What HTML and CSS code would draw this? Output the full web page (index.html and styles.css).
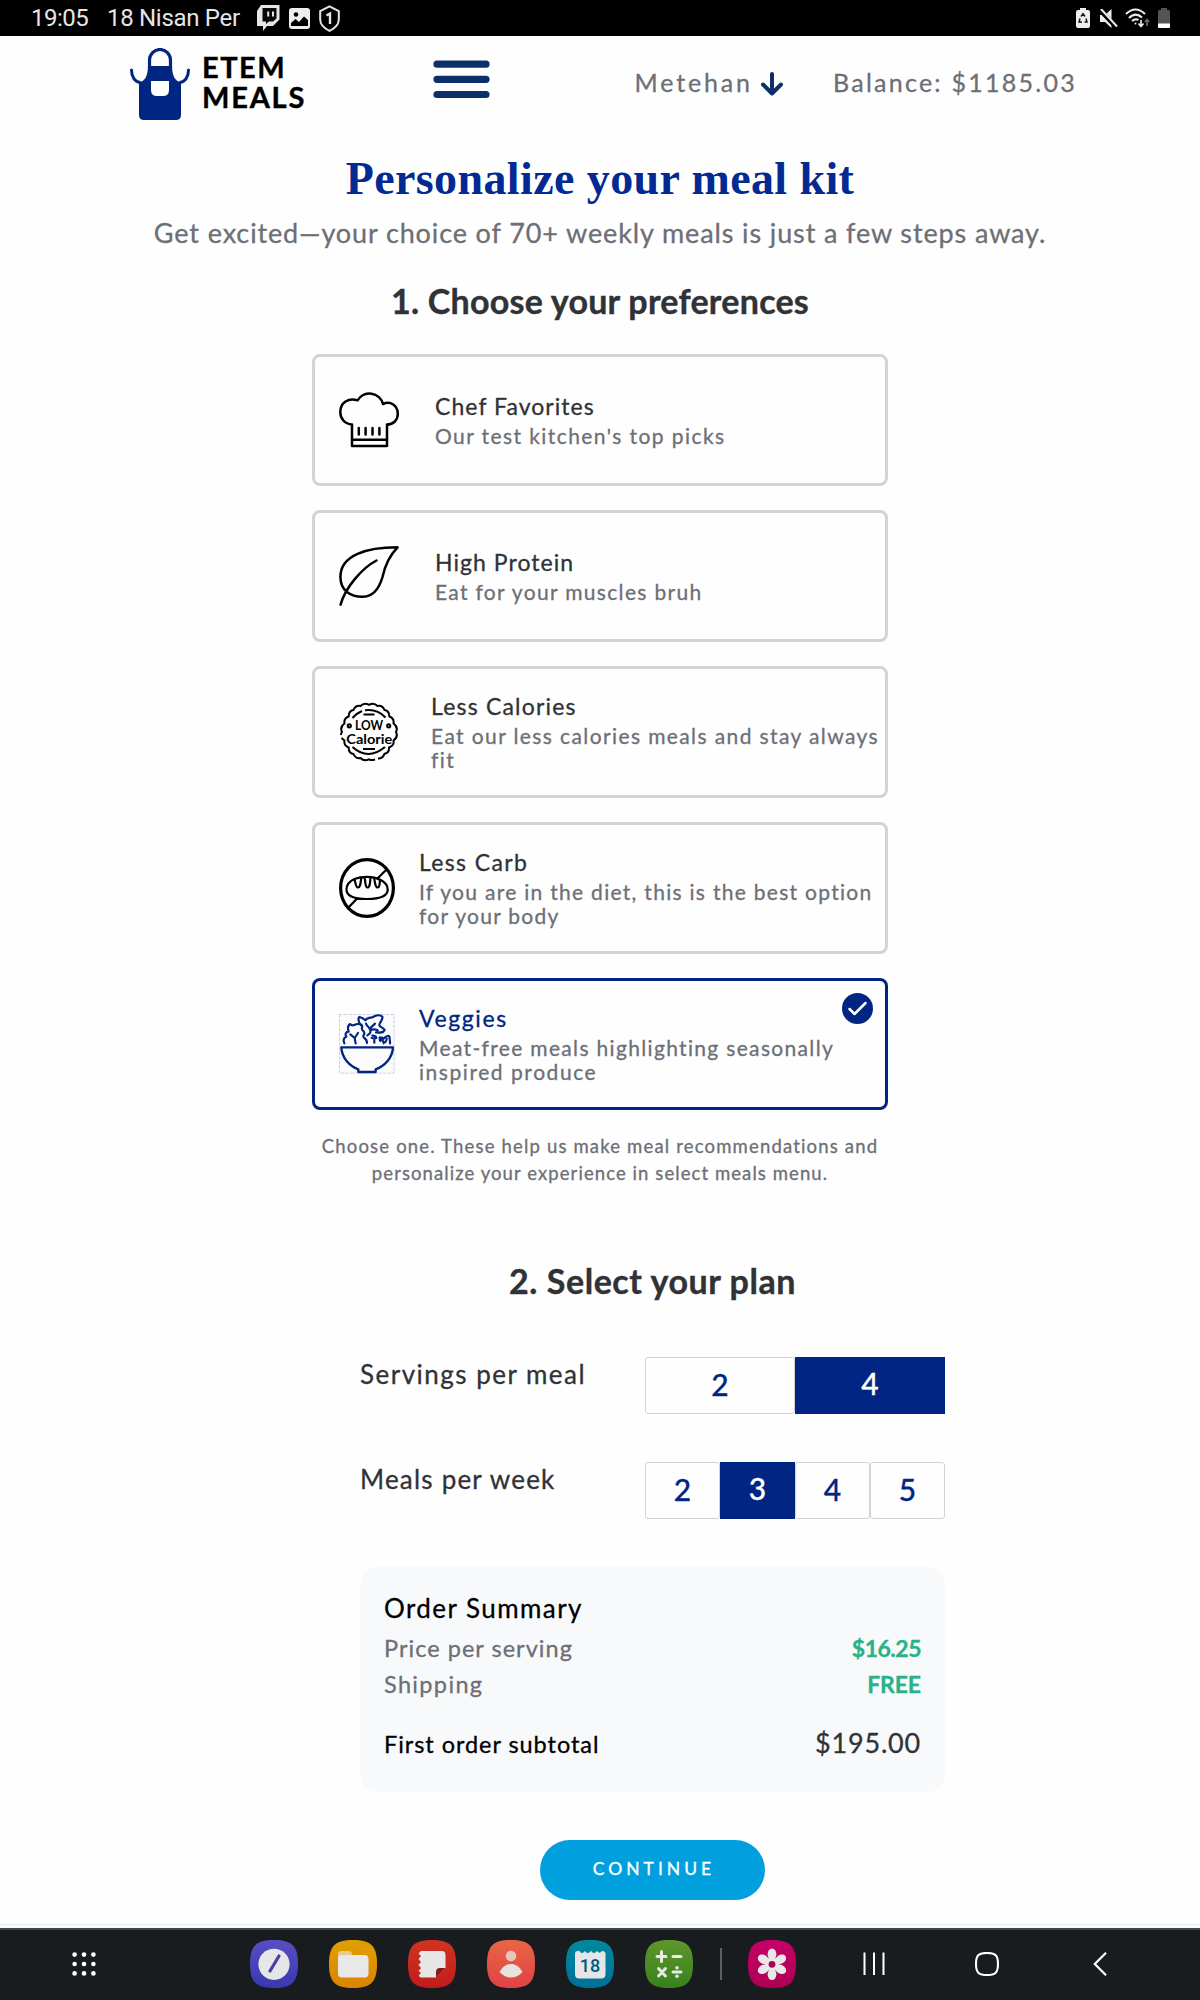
FILE: index.html
```html
<!DOCTYPE html>
<html lang="en">
<head>
<meta charset="utf-8">
<title>Etem Meals</title>
<link rel="stylesheet" href="styles.css">
</head>
<body>
<div class="status">
  <span class="time">19:05</span>
  <span class="date">18 Nisan Per</span>
  <div class="status-left">
    <svg width="23" height="26" viewBox="0 0 23 26"><path d="M4 0H22.500V14.500L16 21H10L6 26V21H0V6Z" fill="#e6e6e6"/><path d="M5.500 3H19.500V13.500L16 16.500H12L9 19V16.500H5.500Z" fill="#0a0a0a"/><path d="M11.200 6.500V11.500M16 6.500V11.500" stroke="#e6e6e6" stroke-width="2"/></svg>
    <svg width="21" height="21" viewBox="0 0 21 21"><rect width="21" height="21" rx="3" fill="#eee"/><circle cx="7" cy="6.500" r="2.300"/><path d="M2 18V15L6.500 11 10 14 15 8.500 19 12V18Z"/></svg>
    <svg width="21" height="27" viewBox="0 0 21 27" fill="none" stroke="#e6e6e6" stroke-width="2"><path d="M10.500 1.300 19.800 6V14.500C19.800 20 15.500 23.500 10.500 25.800 5.500 23.500 1.200 20 1.200 14.500V6Z"/><path d="M7.500 10.500 11 8.500V19" stroke-width="2.400"/></svg>
  </div>
  <div class="status-right">
    <svg width="14" height="20" viewBox="0 0 14 20"><path d="M4 0H10V2H12Q14 2 14 4V18Q14 20 12 20H2Q0 20 0 18V4Q0 2 2 2H4Z" fill="#eee"/><path d="M5 8.500 7 5.800 9 8.500M10 10.500 11 14H8.500M4 10.500 3 14H6" fill="none" stroke="#111" stroke-width="1.400"/></svg>
    <svg width="19" height="19" viewBox="0 0 19 19"><path d="M1 6H6L12.500 0V19L6 13H1Z" fill="#eee"/><path d="M0 0 18 19" stroke="#000" stroke-width="4.500"/><path d="M2 0 18 17.500" stroke="#eee" stroke-width="2"/></svg>
    <svg width="25" height="20" viewBox="0 0 25 20" fill="none" stroke="#eee" stroke-width="2.100"><path d="M1 6Q10.500-3 20 6M4 10Q10.500 3.500 17 9.500M7 13Q10.500 10 13.500 12"/><circle cx="10.500" cy="15.500" r="1" fill="#eee" stroke="none"/><path d="M16 12V18M13.500 15.500 16 18.500 18.500 15.500" stroke-width="1.600"/><path d="M22 18V12M19.800 14 22 11.500 24.200 14" stroke="#666" stroke-width="1.800"/></svg>
    <svg width="12" height="20" viewBox="0 0 12 20"><path d="M3 0H9V2H10.500Q12 2 12 4V20H0V4Q0 2 1.500 2H3Z" fill="#555"/><path d="M0 15.500H12V18.500Q12 20 10.500 20H1.500Q0 20 0 18.500Z" fill="#fff"/></svg>
  </div>
</div>

<header class="header">
  <a class="logo">
    <svg width="60" height="72" viewBox="0 0 60 72"><path d="M19.500 20V12.500A10.500 11 0 0 1 40.500 12.500V20" fill="none" stroke="#002582" stroke-width="3.200"/><path d="M18 18H42C42 27 45 34 51 34V67Q51 72 46 72H14Q9 72 9 67V34C15 34 18 27 18 18Z" fill="#002582"/><path d="M1.500 22C1.500 29 5 34 10 34.500M58.500 22C58.500 29 55 34 50 34.500" fill="none" stroke="#002582" stroke-width="3" stroke-linecap="round"/><path d="M21 33H39V42Q39 48 33 48H27Q21 48 21 42Z" fill="#fff"/></svg>
    <span class="brand"><span class="brand-a">ETEM</span><span class="brand-b">MEALS</span></span>
  </a>
  <svg class="burger" width="57" height="39" viewBox="0 0 57 39"><path d="M4 4.200H53M4 19.300H53M4 34.500H53" stroke="#0b3069" stroke-width="7.200" stroke-linecap="round"/></svg>
  <span class="user">Metehan <svg width="22" height="24" viewBox="0 0 22 24" fill="none" stroke="#0b3069" stroke-width="4" stroke-linecap="round" stroke-linejoin="round"><path d="M11 2V21M2 12.500 11 21.500 20 12.500"/></svg></span>
  <span class="balance">Balance: $1185.03</span>
</header>

<main class="main">
  <h1>Personalize your meal kit</h1>
  <p class="lead">Get excited—your choice of 70+ weekly meals is just a few steps away.</p>

  <h2>1. Choose your preferences</h2>
  <div class="cards">
    <div class="card chef">
      <svg width="60" height="60" viewBox="0 0 60 60" fill="none" stroke="#000" stroke-width="2.500" stroke-linejoin="round"><path d="M13 34.500C5.500 34 1.300 28.500 1.300 22 1.300 12.500 9.500 7.500 18.600 10.400A13.900 13.900 0 0 1 44 14C51.500 10.500 58.800 15.500 58.800 24 58.800 30 54.500 34.500 48 34.500V56H13ZM13 49.800H48"/><path d="M19.800 38V44.500M26.600 38V44.500M33.500 38V44.500M40.400 38V44.500" stroke-linecap="round"/></svg>
      <div><h3>Chef Favorites</h3><p>Our test kitchen's top picks</p></div>
    </div>
    <div class="card protein">
      <svg width="60" height="60" viewBox="0 0 60 60" fill="none" stroke="#000" stroke-width="2.500" stroke-linecap="round" stroke-linejoin="round"><path d="M58.600 1.300C28 1.300 1.400 9 1.400 31 1.400 45 12 51 24 50.700 34 50.500 40 43 43.500 31 46.500 17 51 9 58.600 1.300ZM37.500 14.500C23 22 6 42 1.600 58.600"/></svg>
      <div><h3>High Protein</h3><p>Eat for your muscles bruh</p></div>
    </div>
    <div class="card calories">
      <svg width="60" height="60" viewBox="0 0 60 60" fill="none" stroke="#000" stroke-width="2" stroke-linejoin="round"><path d="M39 56.500Q43.500 56.800 45.500 51.800 50.500 50.800 50 45.500 55.500 43.500 54.500 38.500 59.500 35 57 30 59.500 25 54.500 21.500 55.500 16.500 50.300 14.500 50.500 9 45.500 8 43.500 3 38.500 4 35 .3 30 2.800 25 .3 21.500 4 16.500 3 14.500 8 9.500 9 9.700 14.500 4.500 16.500 5.500 21.500 .5 25 3 30 2 31.500 1.800 33M2.500 36 5.500 38.500Q4.500 43.500 9.700 45.500 9.500 51 14.500 52 16.500 57 21.500 56 25 59.700 30 57.300 33 58.800 36 57.300"/><path d="M13.500 16Q18 11 23 9M26 8.300Q38 6.500 46.500 15.500M24.500 12.600H35.500M13.500 45Q29 59 46 45M24 47H36"/><circle cx="10.300" cy="23.800" r="1.600"/><circle cx="49.700" cy="23.800" r="1.600"/><g class="stamp"><text x="16" y="28.300" textLength="28" lengthAdjust="spacingAndGlyphs">LOW</text><text x="7.300" y="41.500" textLength="46" lengthAdjust="spacingAndGlyphs">Calorie</text></g></svg>
      <div><h3>Less Calories</h3><p>Eat our less calories meals and stay always<br>fit</p></div>
    </div>
    <div class="card carb">
      <svg width="56" height="60" viewBox="0 0 56 60" fill="none" stroke="#000" stroke-width="2.200"><ellipse cx="28" cy="30" rx="26.400" ry="28.400" stroke-width="3.200"/><path d="M48.500 10.500 37.500 21.500M18.500 40 9.500 49.500M15.500 21C11 23 7.500 26.500 7.500 31.500 7.500 38 15 41 28 41S48.700 38 48.700 31.500C48.700 23 37 18.800 28 18.800 23 18.800 19 19.500 15.500 21ZM15.500 21C16.500 24 16.500 29.500 19 29.500S21.500 25 22.300 19.500M25.500 19C26.500 23 26 29.500 28.500 29.500S31 25 31.500 19.500M35 20C36 23 36 29.500 38.500 29.500S40.500 26 41 22"/></svg>
      <div><h3>Less Carb</h3><p>If you are in the diet, this is the best option<br>for your body</p></div>
    </div>
    <div class="card veggies selected">
      <svg width="56" height="60" viewBox="27 27 168 180" fill="none" stroke="#002582" stroke-width="6.500" stroke-linejoin="round" stroke-linecap="round"><defs><pattern id="hatch" width="12" height="12" patternUnits="userSpaceOnUse"><path d="M0 12 12 0" stroke="#e8e8ec" stroke-width="1.500"/></pattern></defs><rect x="28.500" y="28.500" width="164" height="176" fill="url(#hatch)" stroke="#c3c8dc" stroke-width="2.500" stroke-dasharray="8 6"/><path d="M34 127H189C187 160 163 184 137 193V201H85V193C59 184 36 160 34 127Z" fill="none" stroke-width="7"/><path d="M43 115C39 105 41 98 49 95 44 88 48 80 56 80 52 68 55 60 61 57 67 67 74 58 82 57 92 56 99 60 96 68 93 76 104 78 103 85 102 91 96 95 103 99 109 103 111 108 111 114M61 88 74 99 77 115M74 99 84 84M92 60C85 50 84 41 88 36 96 37 101 41 106 46 112 36 125 40 133 34 141 30 152 30 157 35 160 45 147 53 148 61 151 68 161 68 164 75 159 85 149 83 138 82M108 56C112 65 117 66 120 73 124 81 119 87 112 91M120 70 135 56M121 76C129 72 137 73 143 76M127 92C133 92 138 94 139 99 135 101 130 100 125 99M133 102V113M149 97C158 104 161 112 161 115M166 111C169 106 171 103 170 101M151 108C145 97 155 95 161 101 168 91 179 90 179 99 178 103 181 108 180 115"/></svg>
      <div><h3>Veggies</h3><p>Meat-free meals highlighting seasonally<br><span class="tail">inspired produce</span></p></div>
      <svg class="check" width="31" height="31" viewBox="0 0 31 31"><circle cx="15.500" cy="15.500" r="15.500" fill="#002582"/><path d="M7.500 16 12.500 21 23.500 10" fill="none" stroke="#fff" stroke-width="2.500" stroke-linecap="round" stroke-linejoin="round"/></svg>
    </div>
  </div>
  <p class="note">Choose one. These help us make meal recommendations and<br><span>personalize your experience in select meals menu.</span></p>

  <section class="plan">
    <h2>2. Select your plan</h2>
    <div class="row"><span class="label servings">Servings per meal</span><div class="seg"><button>2</button><button class="on">4</button></div></div>
    <div class="row"><span class="label">Meals per week</span><div class="seg"><button>2</button><button class="on">3</button><button>4</button><button>5</button></div></div>
    <div class="summary">
      <h4>Order Summary</h4>
      <div class="line"><span>Price per serving</span><b class="price">$16.25</b></div>
      <div class="line ship"><span>Shipping</span><b>FREE</b></div>
      <div class="line total"><span>First order subtotal</span><span class="sum">$195.00</span></div>
    </div>
    <button class="continue">CONTINUE</button>
  </section>
</main>

<div class="edge"></div>
<nav class="dock">
  <svg class="dots" width="24" height="24" viewBox="0 0 24 24" fill="#fff"><circle cx="2.600" cy="2.600" r="2.300"/><circle cx="12" cy="2.600" r="2.300"/><circle cx="21.400" cy="2.600" r="2.300"/><circle cx="2.600" cy="12" r="2.300"/><circle cx="12" cy="12" r="2.300"/><circle cx="21.400" cy="12" r="2.300"/><circle cx="2.600" cy="21.400" r="2.300"/><circle cx="12" cy="21.400" r="2.300"/><circle cx="21.400" cy="21.400" r="2.300"/></svg>
  <div class="apps">
    <svg width="48" height="48" viewBox="0 0 48 48"><defs>
      <path id="sq" d="M24 0C42 0 48 6 48 24S42 48 24 48 0 42 0 24 6 0 24 0Z"/>
      <linearGradient id="g1" x2="0" y2="1"><stop stop-color="#574fc2"/><stop offset="1" stop-color="#3a38b0"/></linearGradient>
      <linearGradient id="g2" x2="0" y2="1"><stop stop-color="#dfa000"/><stop offset="1" stop-color="#dc8400"/></linearGradient>
      <linearGradient id="g3" x2="0" y2="1"><stop stop-color="#d23420"/><stop offset="1" stop-color="#c01c1c"/></linearGradient>
      <linearGradient id="g4" x2="0" y2="1"><stop stop-color="#e96545"/><stop offset="1" stop-color="#e04246"/></linearGradient>
      <linearGradient id="g5" x2="0" y2="1"><stop stop-color="#00899f"/><stop offset="1" stop-color="#007098"/></linearGradient>
      <linearGradient id="g6" x2="0" y2="1"><stop stop-color="#5f962c"/><stop offset="1" stop-color="#37821c"/></linearGradient>
      <linearGradient id="g7" x2="0" y2="1"><stop stop-color="#c50068"/><stop offset="1" stop-color="#ae0052"/></linearGradient>
    </defs><use href="#sq" fill="url(#g1)"/><circle cx="24" cy="24.300" r="15.600" fill="#e6e6e6"/><path d="M29 16 20 31" stroke="#4a3fa0" stroke-width="3.200" stroke-linecap="round"/></svg>
    <svg width="48" height="48" viewBox="0 0 48 48"><use href="#sq" fill="url(#g2)"/><path d="M9 14Q9 11 12 11H20Q23 11 23 15V20H9Z" fill="#edc88a"/><rect x="9" y="15" width="30.500" height="22.500" rx="4" fill="#e8e8e8"/></svg>
    <svg width="48" height="48" viewBox="0 0 48 48"><use href="#sq" fill="url(#g3)"/><path d="M13 11H34Q37.500 11 37.500 15V28L28 37.500H13Q11 37.500 11 35L13 33 10.500 31 13 28 10.500 25 13 22 10.500 19 13 16 10.500 13.500Z" fill="#e6e6e6"/><path d="M28 37.500V32Q28 28 32 28H37.500Z" fill="#921515"/></svg>
    <svg width="48" height="48" viewBox="0 0 48 48"><use href="#sq" fill="url(#g4)"/><circle cx="24" cy="16" r="5.300" fill="#e7c5be"/><path d="M12.500 32C16 26 20 24 24 24S32 26 35.500 32C32 36 28 37.500 24 37.500S16 36 12.500 32Z" fill="#e8e2dc"/></svg>
    <svg width="48" height="48" viewBox="0 0 48 48"><use href="#sq" fill="url(#g5)"/><path d="M9 14Q9 11 12 11Q13.500 10 14 12Q16 14 18 12Q18.500 10 19.500 12Q22 14 24 12Q25 10 26 12Q28 14 30 12Q31 10 32 12Q34 14 36 11Q39.500 11 39.500 14V34Q39.500 38.500 35 38.500H13Q9 38.500 9 34Z" fill="#e6e6e6"/><text x="24" y="31.800" class="day">18</text></svg>
    <svg width="48" height="48" viewBox="0 0 48 48" fill="none" stroke="#e8e8e8" stroke-width="3" stroke-linecap="round"><use href="#sq" fill="url(#g6)" stroke="none"/><path d="M12 16.500H21M16.500 11.500V21.500M28 16.500H36M13.500 28.500 20.500 36M20.500 28.500 13.500 36M28 32H36"/><circle cx="32" cy="27.800" r="1.800" fill="#e8e8e8" stroke="none"/><circle cx="32" cy="36.200" r="1.800" fill="#e8e8e8" stroke="none"/></svg>
  </div>
  <span class="divider"></span>
  <svg class="gallery" width="48" height="48" viewBox="0 0 48 48"><use href="#sq" fill="url(#g7)"/><g fill="#e8e8e8"><ellipse id="petal" cx="24" cy="14.300" rx="4.400" ry="5.800"/><use href="#petal" transform="rotate(60 24 24.300)"/><use href="#petal" transform="rotate(120 24 24.300)"/><use href="#petal" transform="rotate(180 24 24.300)"/><use href="#petal" transform="rotate(240 24 24.300)"/><use href="#petal" transform="rotate(300 24 24.300)"/><circle cx="24" cy="24.300" r="7"/></g><circle cx="24" cy="24.300" r="3.400" fill="#ad0054"/></svg>
  <svg class="recents" width="22" height="24" viewBox="0 0 22 24" stroke="#fff" stroke-width="2"><path d="M1.500 0.500V23M11 0.500V23M20.500 0.500V23"/></svg>
  <svg class="home" width="24" height="24" viewBox="0 0 24 24"><path d="M12 1C20.500 1 23 3.500 23 12S20.500 23 12 23 1 20.500 1 12 3.500 1 12 1Z" fill="none" stroke="#fff" stroke-width="2.100"/></svg>
  <svg class="back" width="14" height="24" viewBox="0 0 14 24"><path d="M13 0.800 1.800 12 13 23.200" fill="none" stroke="#fff" stroke-width="2.200"/></svg>
</nav>
</body>
</html>
```
FILE: styles.css
```css
* { box-sizing: border-box; margin: 0; padding: 0; }
svg { display: block; flex: none; }
body {
  width: 1200px;
  height: 2000px;
  display: flex;
  flex-direction: column;
  background: #fefefe;
  color: #303236;
  font-family: Lato, "Liberation Sans", sans-serif;
  white-space: nowrap;
  font-variant-ligatures: none;
  overflow: hidden;
}

/* status bar */
.status {
  height: 36px;
  flex: none;
  display: flex;
  padding: 0 31px;
  background: #000;
  color: #e6e6e6;
  font: 24px/36px Roboto, sans-serif;
}
.time { width: 76px; letter-spacing: -.5px; }
.date { width: 150px; letter-spacing: -.3px; }
.status-left, .status-right { display: flex; align-items: center; }
.status-left { gap: 9px; }
.status-right { margin-left: auto; gap: 7.500px; padding-right: 0; margin-right: -.5px; }
.status-right svg:first-child { margin-right: 1px; }

/* header */
.header {
  height: 117px;
  flex: none;
  display: grid;
  grid-template-columns: 303px 201.5px 198.5px auto;
  align-items: start;
  padding-left: 130px;
  font-size: 25px;
  line-height: 36px;
  color: #6d6f76;
}
.logo { display: flex; gap: 12px; padding-top: 12px; }
.brand { display: flex; flex-direction: column; padding-top: 4px; font-size: 29px; font-weight: 700; line-height: 30px; color: #000; -webkit-text-stroke: .4px currentColor; }
.brand-a { letter-spacing: 1.500px; }
.brand-b { letter-spacing: 1.800px; }
.burger { margin-top: 24px; }
.user { display: flex; gap: 8px; align-items: center; margin-top: 28px; letter-spacing: 2.850px; }
.user svg { margin-top: 4px; }
.balance { margin-top: 28px; letter-spacing: 2.250px; }
.user, .balance, .lead, .card, .note, .label, .summary { -webkit-text-stroke: .3px currentColor; }

.main { flex: 1; text-align: center; }
h1 {
  font: 700 46px/52px "Liberation Serif", serif;
  letter-spacing: .4px;
  color: #022a92;
}
.lead { margin-top: 10px; font-size: 27px; line-height: 36px; letter-spacing: .88px; color: #6d6f76; }
h2 { margin-top: 28px; font-size: 34px; line-height: 44px; letter-spacing: .250px; -webkit-text-stroke: .4px currentColor; }

/* preference cards */
.cards { width: 576px; margin: 31px auto 0; display: grid; gap: 24px; text-align: left; }
.card {
  height: 132px;
  display: flex;
  align-items: center;
  gap: 36px;
  padding-left: 24px;
  border: 3px solid #d3d4cd;
  border-radius: 8px;
  position: relative;
}
.card h3 { font-size: 23px; font-weight: 400; line-height: 28px; letter-spacing: 1.050px; color: #303236; }
.card p { margin-top: 4px; font-size: 21px; line-height: 24px; letter-spacing: 1.420px; color: #6d6f76; }
.protein p { letter-spacing: 1.330px; }
.calories { gap: 32px; }
.calories h3 { letter-spacing: 1.200px; }
.calories p { letter-spacing: 1.390px; }
.carb, .veggies { gap: 24px; }
.carb h3 { letter-spacing: 1.350px; }
.carb p { letter-spacing: 1.290px; }
.veggies h3 { letter-spacing: 1.600px; }
.veggies p { letter-spacing: 1.330px; }
.veggies .tail { letter-spacing: 1.550px; }
.card.selected { border-color: #002582; }
.card.selected h3 { color: #002582; }
.check { position: absolute; top: 12px; right: 12px; }
.stamp { font: 700 13px Lato, sans-serif; fill: #000; stroke: none; }

.note { margin-top: 23px; font-size: 18.500px; line-height: 27.300px; letter-spacing: 1.170px; color: #6d6f76; }
.note span { letter-spacing: 1.080px; }

/* plan */
.plan { width: 585px; margin: 71px 0 0 360px; }
.plan h2 { margin: 0 0 54px; letter-spacing: .55px; }
.row { display: flex; justify-content: space-between; align-items: flex-start; height: 57px; margin-bottom: 48px; }
.label { font-size: 26px; line-height: 36px; margin-top: -1px; letter-spacing: 1.200px; }
.servings { letter-spacing: 1.480px; }
.seg { width: 300px; height: 57px; display: flex; }
.seg button {
  flex: 1;
  border: 1px solid #d3d4cd;
  border-radius: 3px;
  background: none;
  font: 500 30px/50px Lato, sans-serif;
  color: #002582;
  padding-bottom: 3px;
  -webkit-text-stroke: .3px currentColor;
}
.seg .on { background: #002582; border-color: #002582; border-radius: 0; color: #fff; padding-bottom: 5px; }

.summary { height: 225px; padding: 23px 24px 0; border-radius: 18px; background: #f8f9fb; text-align: left; }
.summary h4 { font-size: 26px; font-weight: 400; line-height: 36px; letter-spacing: 1.430px; color: #000; }
.line { display: flex; justify-content: space-between; margin-top: 4.500px; font-size: 23.500px; line-height: 36px; letter-spacing: 1.030px; color: #6d6f76; }
.line b { font-size: 23px; letter-spacing: -.1px; color: #29b189; }
.line .price { letter-spacing: -.5px; }
.ship { margin-top: 0; letter-spacing: 1.350px; }
.total { margin-top: 24px; letter-spacing: .950px; color: #000; }
.total .sum { margin-top: -1px; font-size: 27px; letter-spacing: .8px; color: #303236; }
.continue {
  display: block;
  width: 225px;
  height: 60px;
  margin: 48px auto 0;
  padding: 0 0 2px 3px;
  border: 0;
  border-radius: 30px;
  background: #00a0df;
  color: #fff;
  font: 17.500px Lato, sans-serif;
  letter-spacing: 4px;
  -webkit-text-stroke: .3px currentColor;
}

/* system dock */
.edge { height: 4px; flex: none; border-top: 1px solid #e6e9e9; background: #f9fbfb; }
.dock { height: 72px; flex: none; display: flex; align-items: center; padding: 0 0 2px 72px; border-top: 2px solid #40474c; background: #191c1f; }
.apps { display: flex; gap: 31px; margin-left: 153.500px; }
.day { font: 500 18px Roboto, sans-serif; fill: #00597a; text-anchor: middle; }
.divider { width: 2px; height: 32px; margin: 0 26.500px 0 27px; background: #5d6063; }
.recents { margin-left: 67px; }
.home { margin-left: 90px; }
.back { margin-left: 94px; }
```
